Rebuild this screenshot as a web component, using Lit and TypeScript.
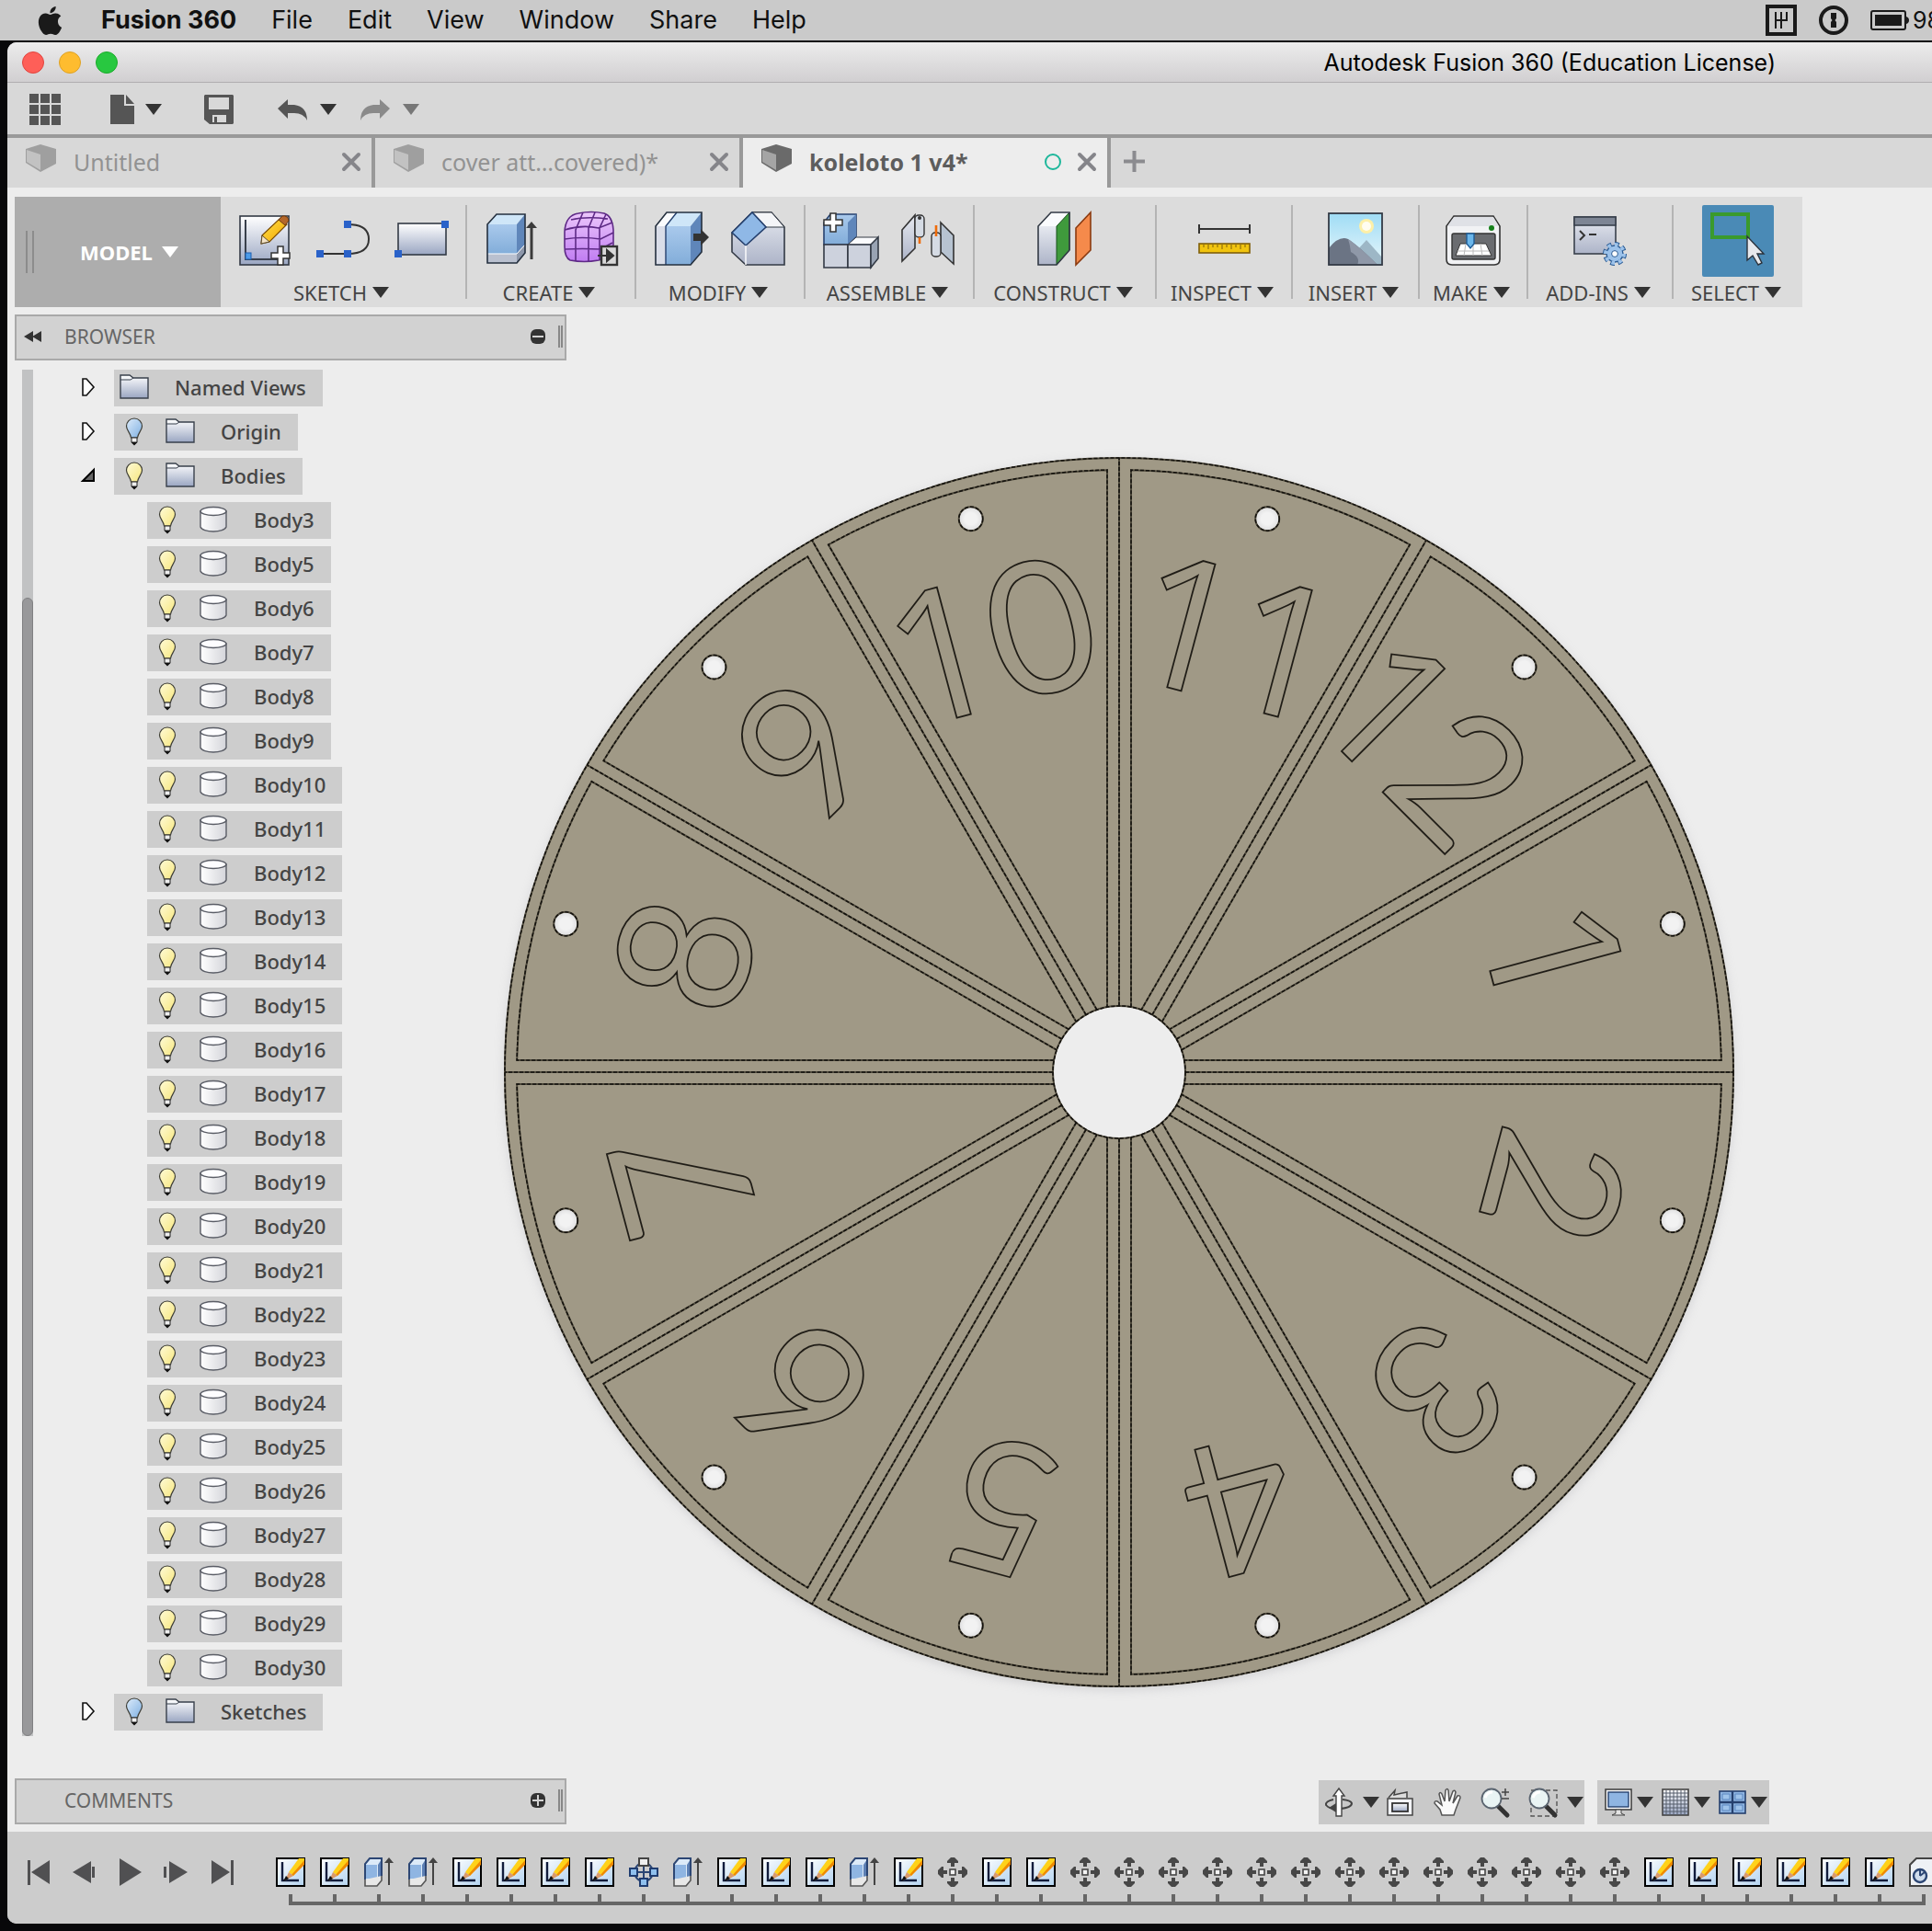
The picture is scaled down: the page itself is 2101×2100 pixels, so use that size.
import { LitElement, html, svg, css, nothing, TemplateResult } from "lit";
import { customElement, state } from "lit/decorators.js";
import { styleMap } from "lit/directives/style-map.js";

type Part = TemplateResult | TemplateResult[];

const icon = (w: number, h: number, body: Part) =>
  html`<svg width=${w} height=${h} viewBox="0 0 ${w} ${h}" aria-hidden="true">${body}</svg>`;

const tri = (fill = "#333") => icon(18, 12, svg`<path d="M0 0H18L9 12Z" fill=${fill} />`);

/* ---------- ribbon artwork, 64 x 64 ---------- */
const plus = (x: number, y: number) => svg`
  <path transform="translate(${x} ${y})" d="M-3-10H3V-3H10V3H3V10H-3V3H-10V-3H-3Z" fill="#fff" stroke="#333" stroke-width="1.5" />`;

const art: Record<string, Part> = {
  sketch: svg`
    <rect x="4" y="7" width="53" height="53" fill="url(#g-paper)" stroke="#333a45" stroke-width="1.6" />
    <path d="M10 11V54H46" fill="none" stroke="#39404c" stroke-width="2" />
    <rect x="10" y="47" width="6" height="7" fill="#4c9be8" stroke="#1c5fb0" />
    <path d="M28 28L48 9L55 16L36 35L27 37Z" fill="url(#g-pencil)" stroke="#7a4b00" stroke-width="1.2" />
    <path d="M46 11L50 7Q56 6 57 12L53 17Z" fill="#b4672a" stroke="#6b3a10" />
    <path d="M28 28L27 37L36 35Z" fill="#f3e3c5" stroke="#5b4a2a" />
    ${plus(48, 50)}`,
  line: svg`
    <path d="M7 48H37Q60 48 60 32Q60 16 37 16" fill="none" stroke="#333" stroke-width="2" />
    <path d="M3 44H11V52H3ZM33 44H41V52H33ZM33 12H41V20H33Z" fill="#2a62c9" />`,
  rect: svg`
    <rect x="8" y="15" width="52" height="34" fill="url(#g-paper)" stroke="#333a45" stroke-width="1.6" />
    <path d="M4 44H12V52H4ZM55 12H63V20H55Z" fill="#2a62c9" />`,
  extrude: svg`
    <path d="M5 16L15 5H46L37 16Z" fill="#cfe6f8" /><path d="M5 16H37V48H5Z" fill="url(#g-blue)" />
    <path d="M37 16L46 5V38L37 48Z" fill="#5f86ba" /><path d="M5 48H37V58H5Z" fill="#b9c0cf" />
    <path d="M37 48L46 38V47L37 58Z" fill="#8d97aa" /><path d="M5 48H37L46 38" fill="none" stroke="#fff" />
    <path d="M5 16L15 5H46V47L37 58H5Z" fill="none" stroke="#25303f" stroke-width="1.6" />
    <path d="M53 54V17" stroke="#3b3b3b" stroke-width="3" /><path d="M47 20L53 13L59 20Z" fill="#3b3b3b" />`,
  form: svg`
    <path d="M5 24Q6 6 20 4Q34 1 48 4Q57 7 58 22V38Q56 52 42 55Q26 58 11 55Q5 52 5 40Z" fill="url(#g-violet)" stroke="#5e2a86" stroke-width="1.6" />
    <path d="M5 22Q24 16 42 20L57 14M5 32Q24 29 44 32L58 25M6 43Q24 42 44 43L57 36M17 56V22L25 3M31 56V20L38 3M43 55V20L50 5M12 11Q28 7 52 10" fill="none" stroke="#5e2a86" stroke-width="1.6" />
    <rect x="45" y="40" width="17" height="20" fill="#d8d8d8" stroke="#333" stroke-width="2.4" />
    <path d="M41 50H51V44L58 50L51 56V50" fill="#333" stroke="#333" stroke-width="2" />`,
  pushpull: svg`
    <path d="M4 18L16 3H27L15 18Z" fill="#fafbfd" /><path d="M4 18H15V60H4Z" fill="#d9dde8" />
    <path d="M15 18L27 3H54L42 18Z" fill="#cfe6f8" /><path d="M15 18H42V60H15Z" fill="url(#g-blue)" />
    <path d="M42 18L54 3V46L42 60Z" fill="#5f86ba" /><path d="M15 60V18L27 3" fill="none" stroke="#25406e" stroke-width="1.4" />
    <path d="M4 18L16 3H54V46L42 60H4Z" fill="none" stroke="#25303f" stroke-width="1.6" />
    <path d="M45 26H53V21L62 30L53 39V34H45Z" fill="#333" />`,
  fillet: svg`
    <path d="M3 25L25 3H46L60 19V60H18L3 46Z" fill="url(#g-steel)" stroke="#333a45" stroke-width="1.6" />
    <path d="M25 3H46L60 19H40Z" fill="#f4f5f8" stroke="#333a45" />
    <path d="M3 25L25 3L40 19L18 39Z" fill="#8fb8e6" stroke="#25406e" stroke-width="1.6" />
    <path d="M18 39V60" stroke="#fff" stroke-width="1.4" />`,
  component: svg`
    <path d="M3 14L10 5H38V29L29 38H3Z" fill="url(#g-blue)" stroke="#25406e" stroke-width="1.6" />
    <path d="M29 14L38 5V29L29 38Z" fill="#5f86ba" />
    <path d="M3 38H29V63H3Z" fill="#cdd2dd" stroke="#333a45" stroke-width="1.6" />
    <path d="M29 38L38 30H62L54 39V38Z" fill="#fafbfd" stroke="#333a45" />
    <path d="M29 38H54V63H29Z" fill="#cdd2dd" stroke="#333a45" stroke-width="1.6" />
    <path d="M54 38L62 30V53L54 63Z" fill="#98a3b3" stroke="#333a45" stroke-width="1.6" />
    ${plus(13, 14)}`,
  joint: svg`
    <path d="M4 22L18 6V42L4 56Z" fill="url(#g-steel)" stroke="#333" stroke-width="1.6" />
    <rect x="18" y="6" width="10" height="24" rx="4" fill="#d5dbe4" stroke="#333" stroke-width="1.4" />
    <circle cx="23" cy="9" r="2" fill="#333" /><path d="M23 30V37" stroke="#ef6c0a" stroke-width="2.6" />
    <path d="M46 14L60 28V59L46 46Z" fill="#b7c3d1" stroke="#333" stroke-width="1.6" />
    <rect x="36" y="25" width="10" height="26" rx="4" fill="#d5dbe4" stroke="#333" stroke-width="1.4" />
    <path d="M41 17V29" stroke="#ef6c0a" stroke-width="2.6" />`,
  plane: svg`
    <path d="M3 18L17 3H37L23 18Z" fill="#fafbfd" /><path d="M3 18H23V60H3Z" fill="url(#g-steel)" />
    <path d="M23 18L37 3V44L23 60Z" fill="#3f9a3c" stroke="#17501a" />
    <path d="M3 18L17 3H37V44L23 60H3Z" fill="none" stroke="#333a45" stroke-width="1.6" />
    <path d="M44 20L60 3V44L44 60Z" fill="#f58a4b" stroke="#8a3a10" stroke-width="1.6" />`,
  measure: svg`
    <path d="M5 16V26M60 16V26M5 21H60" stroke="#333" stroke-width="2" />
    <rect x="5" y="37" width="55" height="10" fill="#f1c40f" stroke="#80600a" stroke-width="1.6" />
    <path d="M10 38V41M15 38V43M20 38V41M25 38V41M30 38V43M35 38V41M40 38V43M45 38V41M50 38V43M55 38V41" stroke="#80600a" stroke-width="1" />`,
  picture: svg`
    <rect x="3" y="4" width="58" height="56" fill="url(#g-sky)" />
    <circle cx="44" cy="18" r="8" fill="#fdf0a8" /><circle cx="44" cy="18" r="5" fill="#fffdf0" />
    <path d="M33 45L44 33L61 52V60H33Z" fill="#9db7c6" />
    <path d="M3 42Q14 28 24 32Q36 40 56 60H3Z" fill="#6b7484" />
    <path d="M24 32Q36 40 56 60H34Q38 52 27 46Q26 38 24 32Z" fill="#8f98a8" />
    <rect x="3" y="4" width="58" height="56" fill="none" stroke="#333a45" stroke-width="1.8" />`,
  printer: svg`
    <path d="M3 18L11 7H54L61 18V54Q61 60 55 60H9Q3 60 3 54Z" fill="#f1f2f4" stroke="#333" stroke-width="1.6" />
    <path d="M4 18L11 8H54L60 18Z" fill="#dfe1e6" /><ellipse cx="52" cy="20" rx="3" ry="3" fill="#15801b" />
    <rect x="9" y="26" width="47" height="28" rx="2" fill="#6a6c70" stroke="#333" stroke-width="1.4" />
    <path d="M18 37H46L52 50H13Z" fill="#fff" stroke="#333" /><path d="M15 45H49M24 37L22 50M32 37V50M40 37L42 50" stroke="#bbb" />
    <path d="M25 26H33V37L29 42L25 37Z" fill="#6bb6ea" stroke="#1f5c96" stroke-width="1.4" />`,
  addins: svg`
    <rect x="4" y="8" width="45" height="40" fill="url(#g-steel)" stroke="#39404c" stroke-width="1.6" />
    <rect x="4" y="8" width="45" height="9" fill="#7d8594" stroke="#39404c" stroke-width="1.6" />
    <path d="M10 23L15 28L10 33M20 27H28" fill="none" stroke="#333" stroke-width="2" />
    <circle cx="48" cy="48" r="10" fill="none" stroke="#2a5b94" stroke-width="6" stroke-dasharray="4.4 3.4" />
    <circle cx="48" cy="48" r="9" fill="#9cc2ea" stroke="#2a5b94" stroke-width="1.4" />
    <circle cx="48" cy="48" r="10" fill="none" stroke="#9cc2ea" stroke-width="4" stroke-dasharray="3.6 4.2" />
    <circle cx="48" cy="48" r="3.4" fill="#fff" stroke="#2a5b94" />`,
  select: svg`
    <rect x="4" y="3" width="39" height="25" fill="none" stroke="#3a9a2d" stroke-width="4" />
    <path d="M42 27V53L48 48L54 58L58 56L53 46H60Z" fill="#e6e8ec" stroke="#2b333d" stroke-width="1.4" />`,
};

const groups: { label: string; icons: string[]; width: number; active?: boolean }[] = [
  { label: "SKETCH", icons: ["sketch", "line", "rect"], width: 268 },
  { label: "CREATE", icons: ["extrude", "form"], width: 184 },
  { label: "MODIFY", icons: ["pushpull", "fillet"], width: 184 },
  { label: "ASSEMBLE", icons: ["component", "joint"], width: 184 },
  { label: "CONSTRUCT", icons: ["plane"], width: 198 },
  { label: "INSPECT", icons: ["measure"], width: 148 },
  { label: "INSERT", icons: ["picture"], width: 138 },
  { label: "MAKE", icons: ["printer"], width: 118 },
  { label: "ADD-INS", icons: ["addins"], width: 158 },
  { label: "SELECT", icons: ["select"], width: 140, active: true },
];

/* ---------- browser tree ---------- */
const bulb = (lit: boolean) => icon(20, 32, svg`
  <path d="M10 2C15 2 18.500 6 18.500 10.500C18.500 15 14 18 13.500 23H6.500C6 18 1.500 15 1.500 10.500C1.500 6 5 2 10 2Z"
    fill=${lit ? "url(#g-bulb)" : "url(#g-bulb-off)"} stroke="#3d3d35" stroke-width="1.2" />
  <path d="M7 23H13V28H7Z" fill="#eee" stroke="#222" /><path d="M6.500 28H13.500L10 31.500Z" fill="#111" />`);
const folder = icon(32, 32, svg`
  <path d="M1 28V3H11L15 6H31V28Z" fill="url(#g-paper)" stroke="#39404c" stroke-width="1.4" />
  <path d="M1 8H12L15 6" fill="none" stroke="#39404c" />`);
const cylinder = icon(32, 30, svg`
  <path d="M2 6V23C3 26 9 28 16 28S29 26 30 23V6Z" fill="url(#g-cyl)" stroke="#5a5d66" stroke-width="1.4" />
  <ellipse cx="16" cy="6" rx="14" ry="4.500" fill="#fdfdff" stroke="#5a5d66" stroke-width="1.4" />`);
const closed = icon(14, 20, svg`<path d="M1 1L5 1L13 10L5 19H1Z" fill="#fff" stroke="#111" stroke-width="1.6" />`);
const open = icon(14, 14, svg`<path d="M13 1V13H1Z" fill="#666" stroke="#000" stroke-width="2" />`);

interface Node { name: string; bulb?: "on" | "off"; kind: "folder" | "body"; open?: boolean }
const tree: Node[] = [
  { name: "Named Views", kind: "folder" },
  { name: "Origin", kind: "folder", bulb: "off" },
  { name: "Bodies", kind: "folder", bulb: "on", open: true },
  ...[3, ...Array.from({ length: 26 }, (_, i) => i + 5)].map(
    (n): Node => ({ name: `Body${n}`, kind: "body", bulb: "on" })
  ),
  { name: "Sketches", kind: "folder", bulb: "off" },
];

/* ---------- timeline ---------- */
const steps = "SSEESSSSPESSSESMSS" + "M".repeat(13) + "SSSSSSH";
const stepNames: Record<string, string> = { S: "Sketch", E: "Extrude", P: "Pattern", M: "Move", H: "Hole" };
const stepArt: Record<string, Part> = {
  S: svg`<rect x="1" y="1" width="30" height="30" fill="url(#g-step)" stroke="#000" stroke-width="2" />
    <path d="M7 5V25H25" fill="none" stroke="#111c3c" stroke-width="2.4" />
    <path d="M31 1H25L14 16L19 20L31 6Z" fill="#ffd21a" /><path d="M31 3L17 19L19 20L31 8Z" fill="#ef8a00" />
    <path d="M14 16L19 20L10 25Z" fill="#d99a6c" /><path d="M11 20L14 23L8 26Z" fill="#111" />`,
  E: svg`<path d="M1 7L6 1H19V22L14 27H1Z" fill="#dceaf8" /><path d="M2 8H14V23H2Z" fill="#8fb5e2" />
    <path d="M19 2V22L15 27V8Z" fill="#5d80b4" /><path d="M1 24V7L6 1H19V20" fill="none" stroke="#2c4674" stroke-width="2" />
    <path d="M1 24V31H14L19 25V20" fill="#e8e8e8" stroke="#555" stroke-width="1.6" />
    <path d="M27 30V4" stroke="#444" stroke-width="2" /><path d="M22 6L27 0L32 6Z" fill="#444" />`,
  P: svg`<circle cx="16" cy="16" r="10" fill="none" stroke="#2c4674" stroke-width="2" />
    <path d="M11 1H21V9H11Z" fill="#eee" stroke="#444" stroke-width="2" />
    <path d="M1 12H9V20H1ZM23 12H31V20H23ZM12 23H20V31H12Z" fill="#8fc0ee" stroke="#1f3c70" stroke-width="2" />
    <path d="M16 10V22M10 16H22" stroke="#2c4674" stroke-width="2" />`,
  M: svg`<path fill="#474747" d="M14 0H18L22 4V6H18V10H14V6H10V4ZM14 32H18L22 28V26H18V22H14V26H10V28ZM0 14V18L4 22H6V18H10V14H6V10H4ZM32 14V18L28 22H26V18H22V14H26V10H28Z" />
    <rect x="13" y="13" width="6" height="6" fill="#f4f4f4" stroke="#474747" stroke-width="1.6" />`,
  H: svg`<path d="M1 31V8L8 1H32V31Z" fill="#eef1f5" stroke="#444" stroke-width="2" />
    <circle cx="12" cy="20" r="7" fill="#cfdcec" stroke="#2c4674" stroke-width="2.400" />
    <path d="M12 20V13M12 20L17 16" stroke="#2c4674" stroke-width="2" />`,
};

/* ---------- the model ---------- */
const R = 668;
const polar = (r: number, deg: number) => {
  const a = (deg * Math.PI) / 180;
  return [Math.sin(a) * r, -Math.cos(a) * r];
};
/* A pocket between two ribs, for a sector centred on "up". */
const pocket = (() => {
  const half = Math.PI / 12;
  const rib = 13;
  const edge = (r: number) => {
    const a = half - Math.asin(rib / r);
    return [Math.sin(a) * r, -Math.cos(a) * r];
  };
  const [ix, iy] = edge(72);
  const [ox, oy] = edge(655);
  return `M${-ix} ${iy}L${-ox} ${oy}A655 655 0 0 1 ${ox} ${oy}L${ix} ${iy}`;
})();

/* Each numeral: character and its distance from the sector's middle line. */
const numerals: [number, [string, number][]][] = [
  [75, [["1", 1]]],
  [105, [["2", -2]]],
  [135, [["3", 0]]],
  [165, [["4", -4]]],
  [195, [["5", 0]]],
  [225, [["6", -2]]],
  [255, [["7", 8]]],
  [285, [["8", 1]]],
  [315, [["9", 4]]],
  [345, [["1", -68], ["0", 43]]],
  [15, [["1", -55], ["1", 54]]],
  [45, [["1", -73], ["2", 36]]],
];

@customElement("app-root")
export class AppRoot extends LitElement {
  @state() private activeTab = 2;

  static styles = css`
    :host {
      display: block;
      background: #08080a;
      color: #111;
      font-family: "Noto Sans", "Open Sans", sans-serif;
      font-size: 22px;
      line-height: 30px;
      overflow: hidden;
    }
    * { box-sizing: border-box; }
    svg { display: block; flex: none; overflow: visible; }
    button {
      font: inherit;
      color: inherit;
      background: none;
      border: 0;
      margin: 0;
      padding: 0;
      display: flex;
      align-items: center;
      white-space: nowrap;
    }
    .defs { position: absolute; width: 0; height: 0; }

    .menubar {
      display: flex;
      align-items: center;
      height: 44px;
      padding-left: 39px;
      margin-bottom: 2px;
      background: #cacaca;
      font: 27px/34px Inter, Roboto, sans-serif;
    }
    .menus { display: flex; gap: 38px; margin-left: 40px; }
    .app-name { font-weight: 700; }
    .status { display: flex; align-items: center; margin-left: auto; gap: 24px; }
    .battery { display: flex; align-items: center; gap: 4px; font-size: 25px; }
    .charge { width: 21px; overflow: hidden; }

    .window {
      margin: 0 0 8px 8px;
      border-radius: 10px 0 0 10px;
      overflow: hidden;
      background: #ededed;
    }
    .titlebar {
      display: flex;
      align-items: center;
      justify-content: space-between;
      height: 44px;
      padding: 0 170px 0 16px;
      background: linear-gradient(#ececec, #d1cfd1);
      border-bottom: 1px solid #b0aeb0;
      font: 25px/32px Inter, Roboto, sans-serif;
      color: #000;
    }
    .lights { display: flex; gap: 16px; }
    .light { width: 24px; height: 24px; border-radius: 50%; border: 1px solid; }
    .red { background: #fe5f58; border-color: #e0443e; }
    .amber { background: #febc2f; border-color: #dea123; }
    .green { background: #28c840; border-color: #1aab29; }

    .quick {
      display: flex;
      align-items: center;
      height: 60px;
      padding: 2px 0 0 24px;
      background: #d8d8d8;
      border-bottom: 4px solid #999;
    }
    .file { margin-left: 54px; gap: 12px; }
    .save { margin-left: 46px; }
    .undo { margin-left: 48px; gap: 14px; }
    .redo { margin-left: 26px; gap: 14px; }

    .tabs { display: flex; height: 54px; background: #d8d8d8; }
    .tab {
      display: flex;
      align-items: center;
      width: 400px;
      padding: 0 12px 2px 20px;
      border-right: 4px solid #999;
      color: #929292;
      font-size: 25px;
    }
    .tab.on { background: #ededed; color: #5d5d5d; font-weight: 700; }
    .tab-name { flex: 1; gap: 19px; }
    .cube { padding-bottom: 8px; }
    .dot { width: 18px; height: 18px; border: 2px solid #1db79b; border-radius: 50%; margin-right: 18px; }
    .add { margin: 0 0 4px 14px; }

    .ribbon {
      display: flex;
      width: max-content;
      height: 120px;
      margin: 10px 0 8px 8px;
      background: #dcdcdc;
      color: #444;
    }
    .mode {
      width: 224px;
      background: #adadad;
      color: #fff;
      font-weight: 700;
      gap: 10px;
      padding-left: 12px;
    }
    .grip { width: 9px; height: 46px; border: solid #8c8c8c; border-width: 0 2px; margin-right: 40px; }
    .group {
      display: flex;
      flex-direction: column;
      align-items: center;
      padding-top: 9px;
      border-right: 2px solid #b4b4b4;
      border-image: linear-gradient(transparent 8%, #b4b4b4 8% 92%, transparent 92%) 1;
    }
    .group:last-child { border: 0; }
    .tools { display: flex; height: 80px; }
    .tool { width: 84px; justify-content: center; height: 74px; }
    .tool.active { width: 78px; height: 78px; background: #4a8ab6; border-radius: 2px; }
    .drop { gap: 6px; padding-right: 4px; }

    .stage { display: grid; grid-template-columns: 539fr 1340fr 214fr; }
    .model { grid-area: 1 / 2; width: 100%; height: auto; align-self: start; margin-top: 154px; }
    .docks {
      grid-area: 1 / 1 / 2 / 4;
      display: grid;
      grid-template-columns: 608px 1fr;
      align-items: end;
      position: relative;
      padding-bottom: 8px;
    }
    .side { padding-left: 8px; }
    .panel-head {
      display: flex;
      align-items: center;
      height: 50px;
      padding: 0 2px 2px 8px;
      background: #d2d2d2;
      border: 2px solid #a9a9a9;
      color: #666;
      font-size: 21px;
    }
    .fold { width: 44px; height: 30px; }
    .panel-title { flex: 1; margin: 0; font-size: 21px; font-weight: 400; }
    .bar { width: 5px; height: 24px; border: solid #888; border-width: 0 2px; margin-left: 14px; }

    .tree-wrap { display: flex; margin: 10px 0 46px 8px; }
    .scroll { width: 12px; background: #c1c2c3; padding-top: 248px; display: flex; }
    .thumb { flex: 1; background: #98989a; border: 1px solid #808082; border-radius: 6px; }
    .tree { list-style: none; margin: 0; padding: 0 0 6px; display: grid; gap: 8px; color: #444; font-weight: 500; }
    .row { display: flex; height: 40px; }
    .twisty { width: 88px; padding: 0 0 2px 53px; }
    .deep .twisty { width: 124px; }
    .node { display: flex; align-items: center; gap: 6px; background: #cdcdcd; padding: 0 18px 2px 0; }
    .cell { width: 44px; display: flex; justify-content: center; }
    .name { margin-left: 16px; }

    .nav { display: flex; justify-content: flex-end; gap: 14px; padding-right: 177px; }
    .nav-bar { display: flex; align-items: center; height: 48px; background: #c9c9c9; padding: 0 1px 0 6px; gap: 20px; }
    .nav-bar.tight { gap: 8px; padding: 0 2px 0 7px; }
    .nav-btn { gap: 4px; }
    .orbit { gap: 10px; margin-right: -14px; }
    .wide { gap: 10px; }

    .timeline { display: flex; height: 100px; background: #cccccc; padding: 28px 0 0 20px; overflow: hidden; }
    .play { display: flex; gap: 18px; height: 32px; width: 272px; flex: none; align-items: center; }
    .steps { display: flex; gap: 16px; list-style: none; margin: 0; padding: 0; }
    .step { width: 32px; flex: none; }
    .step::after {
      content: "";
      display: block;
      box-sizing: border-box;
      width: 48px;
      height: 12px;
      margin: 8px 0 0 14px;
      border-left: 4px solid #666;
      border-bottom: 4px solid #666;
    }
    .step:last-child::after { width: 4px; }

    .edge-base { fill: none; stroke: #4f4a3c; stroke-width: 2; }
    .edge { fill: none; stroke: #12100c; stroke-width: 1.5; stroke-dasharray: 4 2; }
    .numeral { fill: none; stroke: #1f1c16; stroke-width: 1.8; font: 400 200px Lato, sans-serif; text-anchor: middle; }
    .numeral.one { font-family: "Open Sans", "Noto Sans", sans-serif; }
  `;

  private defs() {
    const grad = (id: string, a: string, b: string, x2 = 0, y2 = 1) => svg`
      <linearGradient id=${id} x1="0" y1="0" x2=${x2} y2=${y2}>
        <stop offset="0" stop-color=${a} /><stop offset="1" stop-color=${b} />
      </linearGradient>`;
    return html`<svg class="defs" aria-hidden="true"><defs>
      ${grad("g-paper", "#ffffff", "#9aa6c2")}
      ${grad("g-pencil", "#ffe24a", "#f2a500", 1, 1)}
      ${grad("g-blue", "#a9c9ec", "#82add9")}
      ${grad("g-violet", "#ecc8fb", "#c07cf2")}
      ${grad("g-steel", "#e6e9f0", "#adb4c8")}
      ${grad("g-sky", "#9fdcf5", "#e8f7fb")}
      ${grad("g-step", "#ffffff", "#b3d3f0", 1, 1)}
      ${grad("g-cyl", "#ffffff", "#d4d5da", 1, 0)}
      ${grad("g-bulb", "#fffbd8", "#f6e67e", 1, 1)}
      ${grad("g-bulb-off", "#dcebfa", "#7fb0e2", 1, 1)}
    </defs></svg>`;
  }

  private menubar() {
    return html`<header class="menubar">
      <svg width="31" height="31" viewBox="0 0 24 24" aria-hidden="true"><path fill="#1a1a1a" d="M12.152 6.896c-.948 0-2.415-1.078-3.96-1.04-2.04.027-3.91 1.183-4.961 3.014-2.117 3.675-.546 9.103 1.519 12.090 1.013 1.454 2.208 3.090 3.792 3.039 1.520-.065 2.090-.987 3.935-.987 1.831 0 2.350.987 3.960.948 1.637-.026 2.676-1.480 3.676-2.948 1.156-1.688 1.636-3.325 1.662-3.415-.039-.013-3.182-1.221-3.220-4.857-.026-3.040 2.480-4.494 2.597-4.559-1.429-2.090-3.623-2.324-4.390-2.376-2-.156-3.675 1.090-4.610 1.090zM15.530 3.830c.843-1.012 1.400-2.427 1.245-3.830-1.207.052-2.662.805-3.532 1.818-.780.896-1.454 2.338-1.273 3.714 1.338.104 2.715-.688 3.559-1.701" /></svg>
      <nav class="menus">
        <button class="app-name">Fusion 360</button>
        ${["File", "Edit", "View", "Window", "Share", "Help"].map((m) => html`<button>${m}</button>`)}
      </nav>
      <div class="status">
        ${icon(34, 34, svg`<rect x="2" y="2" width="30" height="30" fill="none" stroke="#1a1a1a" stroke-width="4" />
          <path d="M11 8V26M17 8V26M11 17H23V8" fill="none" stroke="#1a1a1a" stroke-width="2" />`)}
        ${icon(32, 32, svg`<circle cx="16" cy="16" r="14" fill="none" stroke="#1a1a1a" stroke-width="4" />
          <path d="M13 8H19V14L17.500 16L19 18V24H13V18L14.500 16L13 14Z" fill="#1a1a1a" />`)}
        <div class="battery">
          ${icon(42, 22, svg`<rect x="1" y="1" width="37" height="20" rx="2" fill="none" stroke="#1a1a1a" stroke-width="2" />
            <rect x="5" y="5" width="29" height="12" fill="#1a1a1a" /><path d="M39 7Q42 8 42 11Q42 14 39 15Z" fill="#1a1a1a" />`)}
          <span class="charge">98</span>
        </div>
      </div>
    </header>`;
  }

  private chrome() {
    const arrow = (c: string) => svg`<path d="M0 10L11 0V6H18Q32 8 32 23Q28 15 18 15H11V21Z" fill=${c} />`;
    const tabs = ["Untitled", "cover att…covered)*", "koleloto 1 v4*"];
    const cube = (on: boolean) => icon(33, 30, svg`
      <path d="M0 5L16 0L33 5V21L16 30L0 20Z" fill=${on ? "#6a6a6a" : "#9f9f9f"} />
      <path d="M1 6L16 11V28L1 19Z" fill=${on ? "#a5a5a5" : "#c2c2c2"} />`);
    return html`
      <div class="titlebar">
        <div class="lights">
          <button class="light red" aria-label="Close window"></button>
          <button class="light amber" aria-label="Minimise"></button>
          <button class="light green" aria-label="Zoom window"></button>
        </div>
        <span>Autodesk Fusion 360 (Education License)</span>
      </div>
      <div class="quick">
        <button aria-label="Data panel">${icon(34, 34, svg`<path fill="#555" d="M0 0H10V10H0ZM12 0H22V10H12ZM24 0H34V10H24ZM0 12H10V22H0ZM12 12H22V22H12ZM24 12H34V22H24ZM0 24H10V34H0ZM12 24H22V34H12ZM24 24H34V34H24Z" />`)}</button>
        <button class="file" aria-label="File">${icon(26, 32, svg`<path d="M0 0H15V12H26V32H0ZM17 0L26 10H17Z" fill="#555" />`)}${tri()}</button>
        <button class="save" aria-label="Save">${icon(32, 32, svg`<path d="M1 0H31L32 1V31L31 32H6L0 27V1ZM5 3V16H27V3ZM9 22V30H24V22ZM11 24H14V30H11Z" fill="#555" fill-rule="evenodd" />`)}</button>
        <button class="undo" aria-label="Undo">${icon(32, 22, arrow("#555"))}${tri()}</button>
        <button class="redo" aria-label="Redo">${icon(32, 22, svg`<g transform="translate(32) scale(-1 1)">${arrow("#8a8a8a")}</g>`)}${tri("#777")}</button>
      </div>
      <div class="tabs">
        ${tabs.map((t, i) => html`<div class="tab ${i === this.activeTab ? "on" : ""}">
          <button class="tab-name" @click=${() => (this.activeTab = i)}>
            <span class="cube">${cube(i === this.activeTab)}</span>${t}
          </button>
          ${i === 2 ? html`<span class="dot"></span>` : nothing}
          <button aria-label="Close ${t}">${icon(20, 20, svg`<path d="M2 2L18 18M18 2L2 18" stroke="#85858a" stroke-width="4" stroke-linecap="round" />`)}</button>
        </div>`)}
        <button class="add" aria-label="New tab">${icon(23, 23, svg`<path d="M11.500 0V23M0 11.500H23" stroke="#8b8b8f" stroke-width="4" />`)}</button>
      </div>
      <div class="ribbon">
        <button class="mode"><span class="grip"></span>MODEL ${tri("#fff")}</button>
        ${groups.map((g) => html`<div class="group" style=${styleMap({ minWidth: `${g.width}px` })}>
          <div class="tools">
            ${g.icons.map((name) => html`<button class="tool ${g.active ? "active" : ""}" aria-label=${name}>${icon(64, 64, art[name])}</button>`)}
          </div>
          <button class="drop">${g.label} ${tri()}</button>
        </div>`)}
      </div>`;
  }

  private model() {
    const sectors = Array.from({ length: 12 }, (_, i) => i * 30);
    const edges = svg`
      <circle r=${R} /><circle r="72" />
      ${sectors.map((a) => {
        const [x1, y1] = polar(72, a);
        const [x2, y2] = polar(R, a);
        const [hx, hy] = polar(623, a + 15);
        return svg`<path d="M${x1} ${y1}L${x2} ${y2}" />
          <path d=${pocket} transform="rotate(${a + 15})" />
          <circle cx=${hx} cy=${hy} r="13" />`;
      })}`;
    return html`<svg class="model" viewBox="-670 -670 1340 1340" role="img" aria-label="koleloto 1">
      <defs>
        <filter id="f-soft" x="-5%" y="-5%" width="110%" height="110%"><feGaussianBlur stdDeviation="6" /></filter>
        <radialGradient id="g-hole"><stop offset="0.500" stop-color="#f2f2f2" /><stop offset="1" stop-color="#dededf" /></radialGradient>
      </defs>
      <circle r=${R} cy="3" fill="#b9b9bd" opacity="0.600" filter="url(#f-soft)" />
      <circle r=${R} fill="#a09986" />
      <circle r="72" fill="#ededed" />
      ${sectors.map((a) => {
        const [hx, hy] = polar(623, a + 15);
        return svg`<circle cx=${hx} cy=${hy} r="13" fill="url(#g-hole)" />`;
      })}
      <g class="edge-base">${edges}</g>
      <g class="edge">${edges}</g>
      ${numerals.map(([deg, glyphs]) => svg`<g transform="rotate(${deg})">
        ${glyphs.map(([c, x]) => svg`<text class="numeral ${c === "1" ? "one" : ""}" x=${x} y="-418">${c}</text>`)}
      </g>`)}
    </svg>`;
  }

  private side() {
    const sign = (add: boolean) => icon(16, 16, svg`<rect width="16" height="16" rx="6" fill="#333" />
      <path d=${add ? "M2 8H14M8 2V14" : "M2 8H14"} stroke="#d2d2d2" stroke-width="2" />`);
    return html`<aside class="side">
      <div class="panel-head">
        <button class="fold" aria-label="Collapse browser">${icon(19, 12, svg`<path d="M10 0V12L0 6ZM19 0V12L9 6Z" fill="#333" />`)}</button>
        <h2 class="panel-title">BROWSER</h2>
        <button aria-label="Collapse tree">${sign(false)}</button><span class="bar"></span>
      </div>
      <div class="tree-wrap">
        <div class="scroll"><div class="thumb"></div></div>
        <ul class="tree">
          ${tree.map((n) => html`<li class="row ${n.kind === "body" ? "deep" : ""}">
            ${n.kind === "body"
              ? html`<span class="twisty"></span>`
              : html`<button class="twisty" aria-label="Toggle ${n.name}">${n.open ? open : closed}</button>`}
            <div class="node">
              ${n.bulb ? html`<span class="cell">${bulb(n.bulb === "on")}</span>` : nothing}
              <span class="cell">${n.kind === "body" ? cylinder : folder}</span>
              <span class="name">${n.name}</span>
            </div>
          </li>`)}
        </ul>
      </div>
      <div class="panel-head">
        <span class="fold"></span>
        <h2 class="panel-title">COMMENTS</h2>
        <button aria-label="Add comment">${sign(true)}</button><span class="bar"></span>
      </div>
    </aside>`;
  }

  private nav() {
    const lens = svg`<path d="M19 20L29 30" stroke="#333" stroke-width="5" stroke-linecap="round" />
      <circle cx="12" cy="12" r="10.500" fill="#e9f4f4" stroke="#5a6470" stroke-width="1.8" /><path d="M5 11Q7 5 13 5" fill="none" stroke="#fff" stroke-width="3" />`;
    const glyphs = {
      orbit: svg`<path d="M10 13Q1 15 2 19Q6 24 17 23Q30 22 30 17Q29 14 20 13" fill="none" stroke="#444" stroke-width="2" />
        <path d="M13 31V9H10L16 1L22 9H19V31Z" fill="#fff" stroke="#444" stroke-width="1.4" /><path d="M13 17V27L5 22Z" fill="#444" />`,
      look: svg`<path d="M4 11L11 3L10 8L24 5V11" fill="#ddd" stroke="#444" stroke-width="1.5" />
        <rect x="3" y="12" width="27" height="18" fill="#f2f3f6" stroke="#444" stroke-width="1.5" /><rect x="8" y="17" width="17" height="9" fill="url(#g-paper)" stroke="#333" stroke-width="1.8" />`,
      pan: svg`<path d="M10 30L8 24L2 17Q2 14 5 15L10 19L7 7Q8 4 10 7L13 15L14 3Q16 0 17 3L18 15L22 4Q24 2 25 5L22 17L27 9Q30 8 30 11L25 24L23 30Z" fill="#fbfbfb" stroke="#555" stroke-width="1.500" />`,
      zoom: svg`${lens}<path d="M23 5H31M27 1V9M23 12H31" stroke="#444" stroke-width="1.5" />`,
      fit: svg`<rect x="3" y="3" width="28" height="28" fill="none" stroke="#555" stroke-width="1.400" stroke-dasharray="5 3" />${lens}`,
      display: svg`<rect x="2" y="2" width="28" height="22" fill="#fff" stroke="#444" stroke-width="1.6" /><rect x="5" y="5" width="22" height="16" fill="#8fb5e2" stroke="#25406e" stroke-width="1.400" />
        <path d="M13 24H19V28L23 30H9L13 28Z" fill="#e4e4e4" stroke="#444" />`,
      grid: svg`<rect x="2" y="2" width="28" height="28" fill="url(#g-paper)" stroke="#444" stroke-width="1.600" />
        <path d="M6 3V30M10 3V30M14 3V30M18 3V30M22 3V30M26 3V30M2 6H30M2 10H30M2 14H30M2 18H30M2 22H30M2 26H30" stroke="#555c6b" />`,
      views: svg`<rect x="2" y="4" width="28" height="24" fill="#8fb5e2" stroke="#25406e" stroke-width="1.600" /><path d="M16 4V28M2 16H30" stroke="#25406e" stroke-width="2.400" />
        <path d="M5 7H13V13H5ZM19 7H27V13H19ZM5 19H13V25H5ZM19 19H27V25H19Z" fill="#9fc3ea" stroke="#5b86bf" />`,
    };
    const b = (label: string, g: Part, cls = "", drop = false) =>
      html`<button class="nav-btn ${cls}" aria-label=${label}>${icon(32, 32, g)}${drop ? tri() : nothing}</button>`;
    return html`<div class="nav">
      <div class="nav-bar">
        ${b("Orbit", glyphs.orbit, "orbit", true)}${b("Look at", glyphs.look)}${b("Pan", glyphs.pan)}
        ${b("Zoom", glyphs.zoom)}${b("Zoom window", glyphs.fit, "wide", true)}
      </div>
      <div class="nav-bar tight">
        ${b("Display settings", glyphs.display, "", true)}${b("Grid and snaps", glyphs.grid, "", true)}
        ${b("Viewports", glyphs.views, "", true)}
      </div>
    </div>`;
  }

  private timeline() {
    const controls: [string, string][] = [
      ["Go to start", "M2 3H5V30H2ZM26 3V29L6 16Z"],
      ["Step back", "M21 4V28L1 16ZM22 10H25V22H22Z"],
      ["Play", "M2 1L26 16L2 31Z"],
      ["Step forward", "M0 10H3V22H0ZM6 4L26 16L6 28Z"],
      ["Go to end", "M2 3L22 16L2 29ZM23 3H26V30H23Z"],
    ];
    return html`<footer class="timeline">
      <div class="play">
        ${controls.map(([label, d]) => html`<button aria-label=${label}>${icon(32, 32, svg`<path d=${d} fill="#505052" />`)}</button>`)}
      </div>
      <ol class="steps">
        ${[...steps].map((s) => html`<li class="step"><button aria-label=${stepNames[s]}>${icon(32, 32, stepArt[s])}</button></li>`)}
      </ol>
    </footer>`;
  }

  render() {
    return html`
      ${this.defs()} ${this.menubar()}
      <div class="window">
        ${this.chrome()}
        <main class="stage">
          ${this.model()}
          <div class="docks">${this.side()} ${this.nav()}</div>
        </main>
        ${this.timeline()}
      </div>`;
  }
}
